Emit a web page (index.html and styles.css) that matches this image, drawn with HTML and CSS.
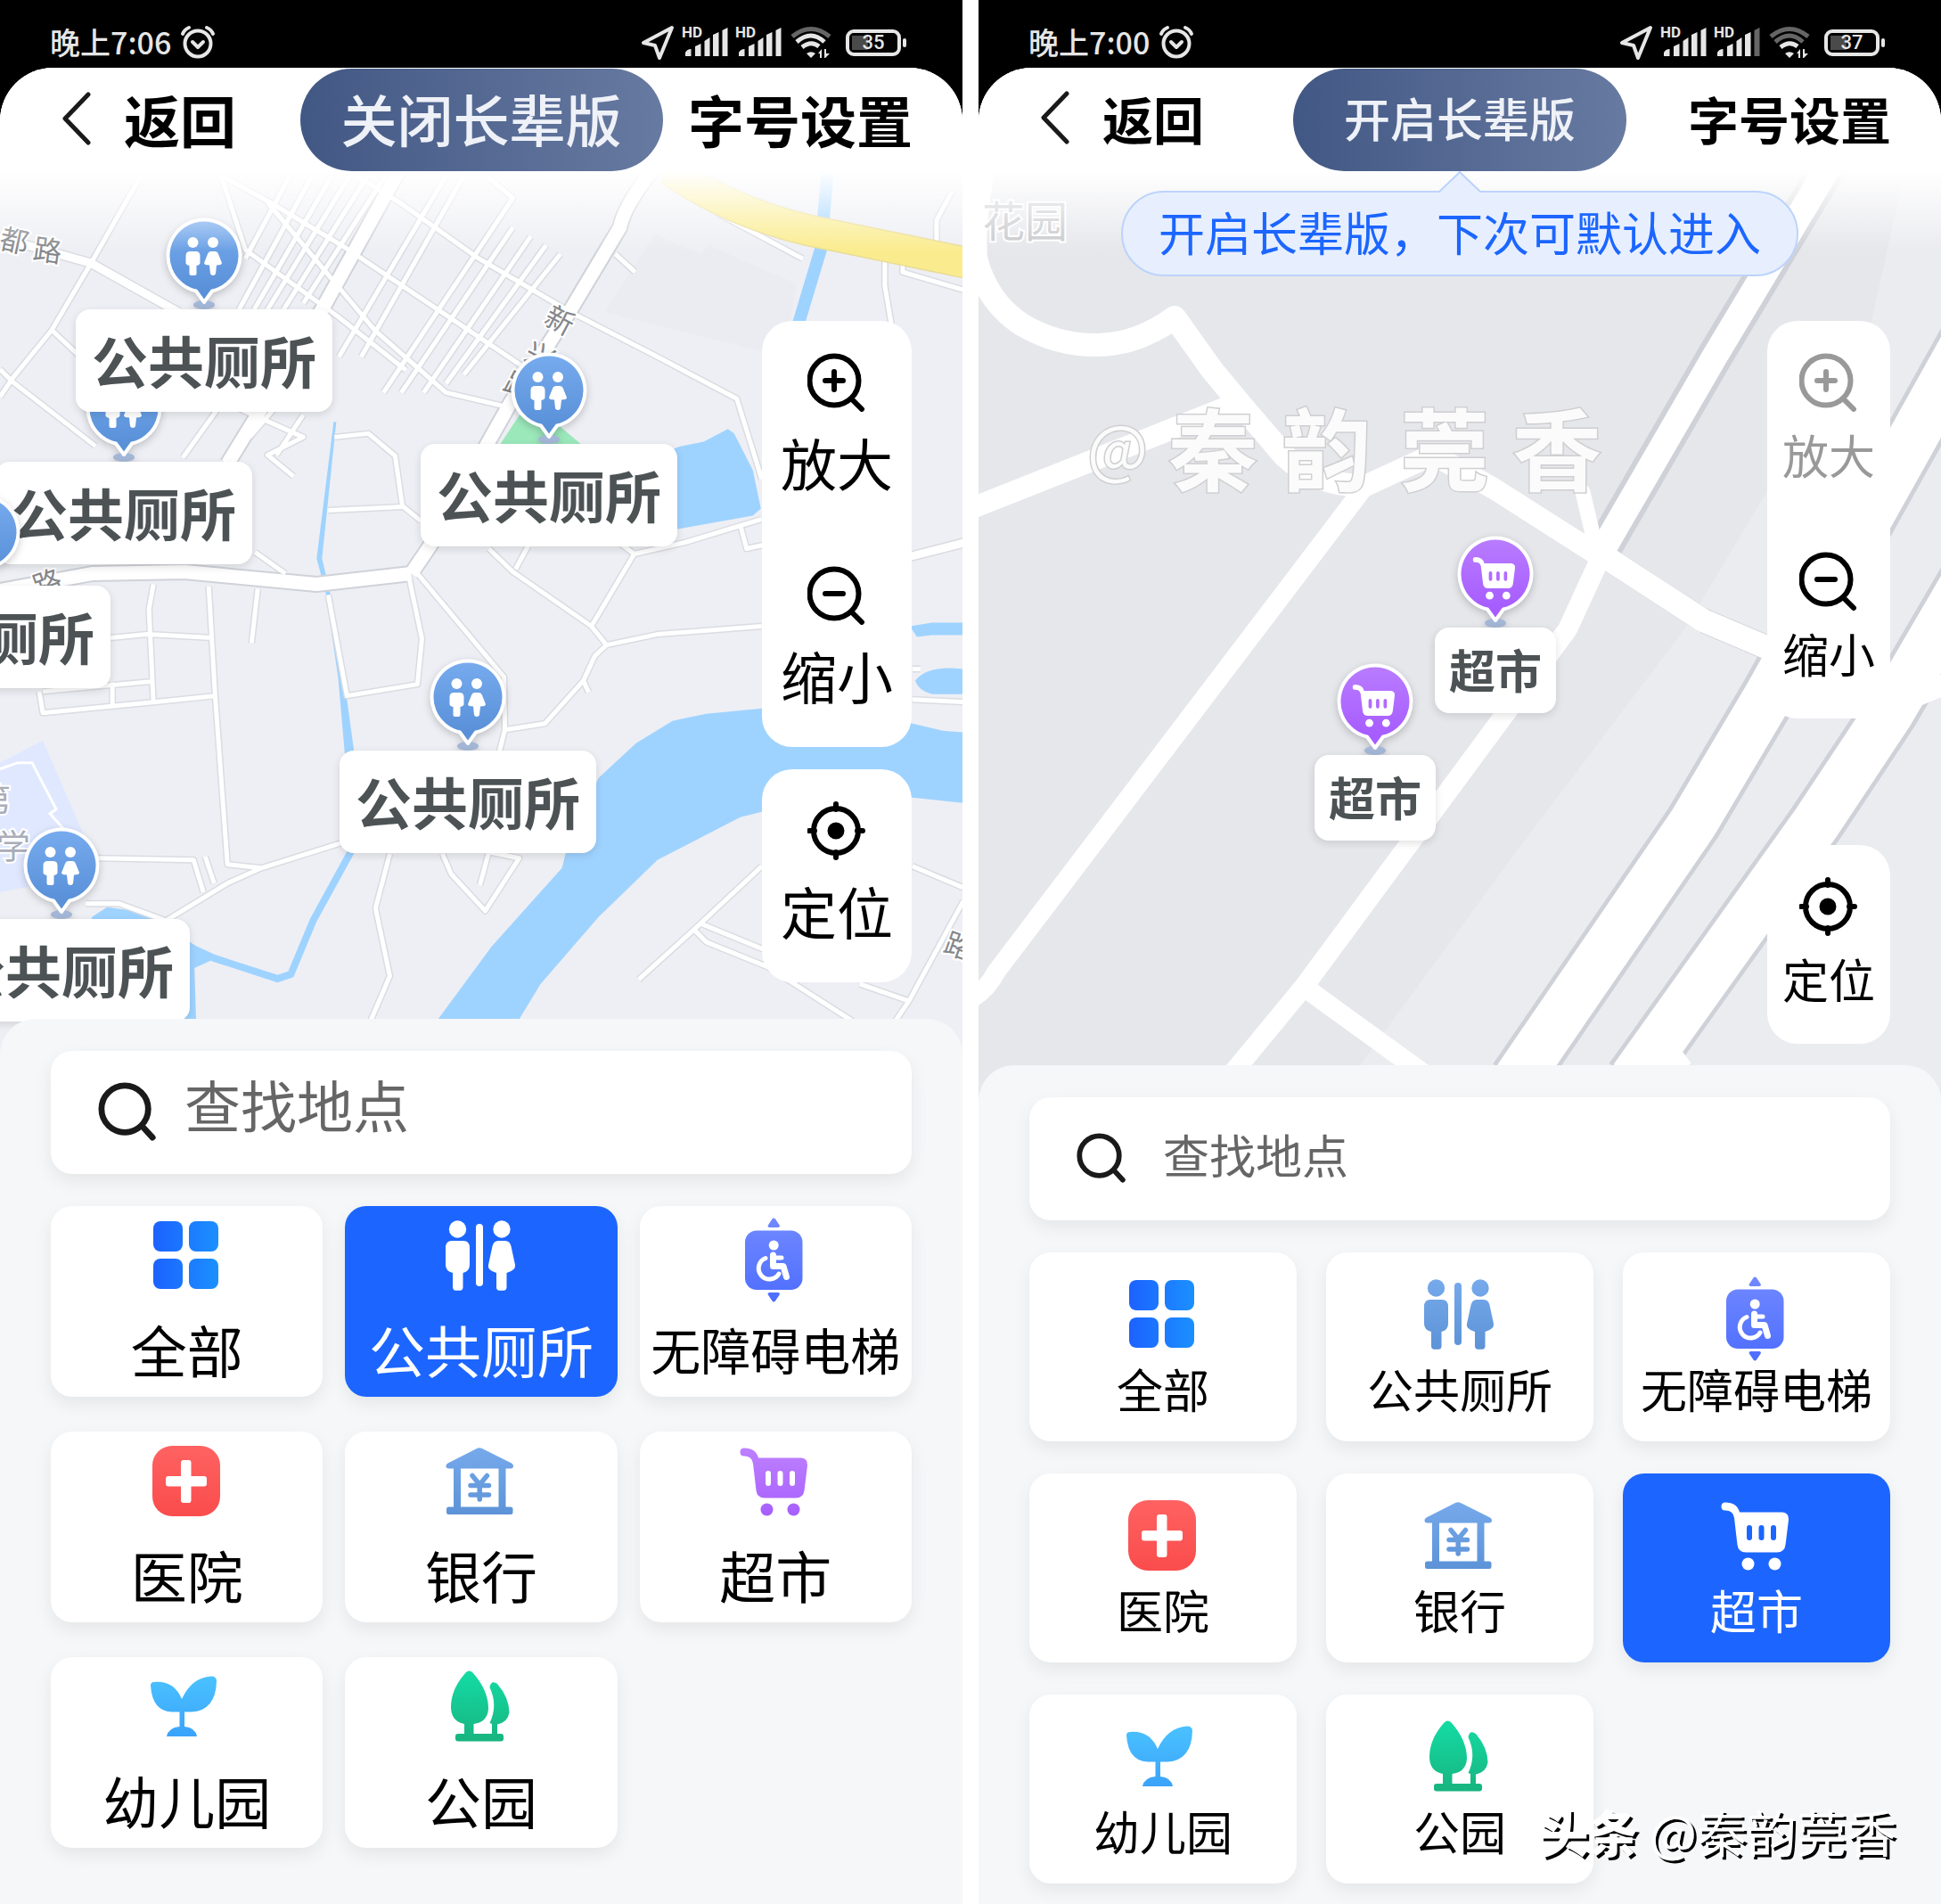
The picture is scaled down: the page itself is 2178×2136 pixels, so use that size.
FILE: index.html
```html
<!DOCTYPE html>
<html lang="zh-CN">
<head>
    <meta charset="UTF-8">
    <meta name="viewport" content="width=device-width, initial-scale=1.0">
    <title>长辈版地图</title>
    <link rel="stylesheet" href="styles.css">
</head>
<body>
    <!-- shared icons -->
    <svg class="sprite" aria-hidden="true">
        <defs>
            <linearGradient id="g-all" gradientUnits="userSpaceOnUse" x1="9" y1="0" x2="82" y2="0"><stop offset="0" stop-color="#1c62ff"/><stop offset="1" stop-color="#1b90ff"/></linearGradient>
            <linearGradient id="g-blue" gradientUnits="userSpaceOnUse" x1="0" y1="4" x2="0" y2="84"><stop offset="0" stop-color="#76aaec"/><stop offset="1" stop-color="#5c92d6"/></linearGradient>
            <linearGradient id="g-indigo" gradientUnits="userSpaceOnUse" x1="0" y1="2" x2="0" y2="95"><stop offset="0" stop-color="#7189ff"/><stop offset="1" stop-color="#4d6dff"/></linearGradient>
            <linearGradient id="g-red" gradientUnits="userSpaceOnUse" x1="0" y1="4" x2="0" y2="83"><stop offset="0" stop-color="#ff6262"/><stop offset="1" stop-color="#fa4c4c"/></linearGradient>
            <linearGradient id="g-purple" gradientUnits="userSpaceOnUse" x1="0" y1="7" x2="0" y2="83"><stop offset="0" stop-color="#bd80ff"/><stop offset="1" stop-color="#a75ffd"/></linearGradient>
            <linearGradient id="g-sky" gradientUnits="userSpaceOnUse" x1="0" y1="9" x2="0" y2="78"><stop offset="0" stop-color="#4ac2ff"/><stop offset="1" stop-color="#3aa2fa"/></linearGradient>
            <linearGradient id="g-green" gradientUnits="userSpaceOnUse" x1="0" y1="4" x2="0" y2="83"><stop offset="0" stop-color="#14dba4"/><stop offset="1" stop-color="#18b47f"/></linearGradient>
            <linearGradient id="g-pin" gradientUnits="userSpaceOnUse" x1="0" y1="6" x2="0" y2="86"><stop offset="0" stop-color="#77abee"/><stop offset="1" stop-color="#5990d8"/></linearGradient>
            <linearGradient id="g-pin-shop" gradientUnits="userSpaceOnUse" x1="0" y1="6" x2="0" y2="86"><stop offset="0" stop-color="#b97cff"/><stop offset="1" stop-color="#a65cff"/></linearGradient>

            <symbol id="i-all" viewBox="0 0 94 96">
                <rect x="9" y="5" width="33" height="34" rx="8"/><rect x="49" y="5" width="33" height="34" rx="8"/>
                <rect x="9" y="47" width="33" height="34" rx="8"/><rect x="49" y="47" width="33" height="34" rx="8"/>
            </symbol>
            <symbol id="i-toilet" viewBox="0 0 94 96">
                <circle cx="20.500" cy="14" r="9.700"/>
                <path d="M14 27H27Q34 27 34 35V54Q34 61 26.500 63V79Q26.500 82.700 23 82.700H18.500Q15 82.700 15 79V63Q7 61 7 54V35Q7 27 14 27Z"/>
                <rect x="41" y="8" width="8" height="70" rx="4"/>
                <circle cx="70" cy="14" r="9.700"/>
                <path d="M66 27H74Q79 27 80.500 33L85 54Q86 60 75.500 63V79Q75.500 82.700 72 82.700H67.500Q64 82.700 64 79V63Q53.500 60 55 54L59.500 33Q61 27 66 27Z"/>
            </symbol>
            <symbol id="i-lift" viewBox="0 0 94 96">
                <path d="M43.500 2.500Q45.200 0.500 47 2.500L52 10Q52 12 50 12H40.500Q38.500 12 38.500 10Z"/>
                <path d="M43.500 94.500Q45.200 96.500 47 94.500L52 87Q52 85 50 85H40.500Q38.500 85 38.500 87Z"/>
                <rect x="13" y="15.500" width="64.500" height="66.500" rx="13"/>
                <circle cx="45.200" cy="32" r="5.500" fill="#fff"/>
                <g fill="none" stroke="#fff" stroke-linecap="round" stroke-linejoin="round">
                    <path stroke-width="7" d="M44.500 43V55.500H56L59.500 67.500"/>
                    <path stroke-width="5" d="M45 46H54"/>
                    <path stroke-width="5" d="M36 46.500A12.200 12.200 0 1 0 51 64"/>
                </g>
            </symbol>
            <symbol id="i-hospital" viewBox="0 0 94 96">
                <rect x="8" y="4" width="76" height="79" rx="22"/>
                <path fill="#fff" d="M43 20H49Q51.500 20 51.500 23V38H66Q69 38 69 41V46.500Q69 49.500 66 49.500H51.500V65Q51.500 68 49 68H43Q40 68 40 65V49.500H26Q23 49.500 23 46.500V41Q23 38 26 38H40V23Q40 20 43 20Z"/>
            </symbol>
            <symbol id="i-bank" viewBox="0 0 94 96">
                <path fill-rule="evenodd" d="M42 7Q45 5.500 48 7L81 23.500Q83.500 25 83 27.500Q82.500 29.500 80 29.500H74.500V72.500H80Q82.500 72.500 82.500 75V78.500Q82.500 81 80 81H10.500Q8 81 8 78.500V75Q8 72.500 10.500 72.500H16V29.500H10.500Q8 29.500 7.500 27.500Q7 25 9.500 23.500ZM24 29.500V72.500H66.500V29.500Z"/>
                <path fill="none" stroke="url(#g-blue)" stroke-width="5.500" stroke-linecap="round" stroke-linejoin="round" d="M37 37.500L45.200 47.500L53.500 37.500M35 48.500H55.500M35 59H55.500M45.200 48V64"/>
            </symbol>
            <symbol id="i-cart" viewBox="0 0 94 96">
                <path d="M12 6.500Q25 6.500 28 17.500H76Q83.500 18 83 26L79.500 54Q78.500 62.500 70 62.500H35Q26.500 62.500 25.500 54L22 24Q21 15.500 12 15.500Q7.500 15.500 7.500 11Q7.500 6.500 12 6.500Z"/>
                <circle cx="37.500" cy="75.500" r="7"/><circle cx="67.500" cy="75.500" r="7"/>
                <path class="slot" d="M39 35V46M52.500 35V46M66 35V46"/>
            </symbol>
            <symbol id="i-sprout" viewBox="0 0 94 96">
                <path d="M10 16Q32 14 41 35Q52 11 74 9.500Q80 9.500 80 15Q79 48 52 49.500H44V66Q56 67 58 77H24Q26 67 38.500 66V49.500H30Q8 49 6 20Q6 16 10 16Z"/>
            </symbol>
            <symbol id="i-tree" viewBox="0 0 94 96">
                <path d="M29.500 5.500Q33.500 1.500 37.500 5.500Q55 25 55 46Q54 61 38.500 63V74H59V63L56.500 62Q66 42 56.500 22Q58 13 65 18Q78 33 78.500 50Q77 61 65 63.500V74H69Q72 74 72 77V79.500Q72 82.500 69 82.500H21Q18 82.500 18 79.500V77Q18 74 21 74H28V63Q13 60 13 44Q13 24 29.500 5.500Z"/>
            </symbol>

            <symbol id="i-pin" viewBox="0 0 96 108">
                <ellipse cx="48" cy="101" rx="12" ry="5" fill="#a3b6d6"/>
                <path class="pin-body" d="M48 98L39 85.500A40.500 40.500 0 1 1 57 85.500Z"/>
            </symbol>
            <symbol id="i-people" viewBox="0 0 96 108">
                <circle cx="35.500" cy="31" r="6"/><circle cx="58" cy="31" r="6"/>
                <path d="M32.500 41H38.500Q43.500 41 43.500 46V54Q43.500 56 39.500 57V66Q39.500 68 37.500 68H33.500Q31.500 68 31.500 66V57Q27.500 56 27.500 54V46Q27.500 41 32.500 41Z"/>
                <path d="M56 41H60Q63 41 64 44L68 54Q68 56.500 62 56.500L61 66Q60.500 68 58 68Q55.500 68 55 66L54 56.500Q48 56.500 48 54L52 44Q53 41 56 41Z"/>
            </symbol>
            <symbol id="i-plus" viewBox="0 0 66 66">
                <path d="M61 63L51 53M30 21V41M20 31H40"/><circle cx="30" cy="31" r="27.500"/>
            </symbol>
            <symbol id="i-minus" viewBox="0 0 66 66">
                <path d="M61 63L51 53M20 31H40"/><circle cx="30" cy="31" r="27.500"/>
            </symbol>
            <symbol id="i-locate" viewBox="0 0 66 66">
                <circle cx="32" cy="33" r="25"/><path d="M32 3V9M32 57V63M2 33H8M56 33H62"/><circle cx="32" cy="33" r="6.500" fill="#000"/>
            </symbol>
            <symbol id="i-search" viewBox="0 0 66 68">
                <circle cx="30" cy="31" r="27"/><path d="M51 52L62 64"/>
            </symbol>
            <symbol id="i-alarm" viewBox="0 0 40 40">
                <circle cx="20" cy="21" r="14.500"/><path d="M14 19L20 25L26 19M3 10Q5 5 10 3M37 10Q35 5 30 3"/>
            </symbol>
            <symbol id="i-nav" viewBox="0 0 38 40">
                <path d="M35 3L3 20L16 23L21 37Z"/>
            </symbol>
            <symbol id="i-bars" viewBox="0 0 50 40">
                <path d="M2 35V31Q4 27 8.500 27V35ZM13 35V24L19.500 21V35ZM23.500 35V18L29.500 14V35ZM33 35V11L39.500 8V35Z"/>
            </symbol>
            <symbol id="i-lastbar" viewBox="0 0 50 40"><path d="M43.500 35V6L49.500 3V35Z"/></symbol>
            <symbol id="i-wifi" viewBox="0 0 48 40">
                <path class="wifi-dot" d="M23 37L18 32Q23 28.500 28 32Z"/>
                <path class="wifi-dot" d="M31 32L35 27V37H33V32ZM38 27H40V32H44L39 37H38Z"/>
                <path d="M13 25Q23 17 32 24"/>
            </symbol>
        </defs>
    </svg>

    <main class="phones">
        <section class="phone phone-elder">
            <div class="statusbar">
                <span class="time">晚上7:06</span>
                <svg class="st-line" width="40" height="40"><use href="#i-alarm"/></svg>
                <div class="status-icons">
                    <svg class="st-line" width="38" height="40"><use href="#i-nav"/></svg>
                    <svg class="st-fill" width="50" height="40"><text x="-2" y="14">HD</text><use href="#i-bars"/><use href="#i-lastbar"/></svg>
                    <svg class="st-fill" width="50" height="40"><text x="-2" y="14">HD</text><use href="#i-bars"/><use href="#i-lastbar"/></svg>
                    <svg class="st-wifi" width="48" height="40"><path class="dim" d="M2 13Q23 -4 44 13"/><path d="M7 19Q23 5 38 19"/><use href="#i-wifi"/></svg>
                    <span class="battery">35</span>
                </div>
            </div>
            <div class="screen">
                <div class="map-area">
                    <svg class="map map-city" viewBox="0 76 1080 1106" preserveAspectRatio="xMinYMin slice" aria-hidden="true">
                        <defs>
                            <g id="city-small">
                                <path d="M158 197L102 295L58 370L14 424L0 445M0 414L14 428L107 500M58 370L90 400"/>
                                <path d="M248 197L303 227L386 277L585 410M248 197L275 280L379 355L455 415M300 227L420 370L500 440L572 457"/>
                                <path d="M399 197L448 227L537 290L640 350L737 400L826 447L854 537"/>
                                <path d="M325 197L275 290M350 197L268 347M372 197L285 347M392 197L300 347M412 197L318 347M432 197L340 340"/>
                                <path d="M500 197L380 400M520 197L405 400M545 197L575 222L430 440M575 255L450 440M595 265L475 440M612 275L500 430M628 285L520 420"/>
                                <path d="M205 513L250 450L340 490L300 510L329 534M310 510L340 465M280 490L310 455"/>
                                <path d="M806 225V240L900 290M1067 215L1050 247V280M992 290V320L1002 380M1012 293V305L1080 325M690 285L712 305"/>
                                <path d="M375 490L413 486L443 511L451 567L472 584M368 572L451 568M286 619L320 643"/>
                                <path d="M172 655L167 683L172 787M234 657L241 777L255 969L293 973L382 945M293 973L255 990L186 1032M124 715L165 711L238 715M44 775L48 799L172 787L241 780M48 775L169 764M126 765V790M289 660L282 721"/>
                                <path d="M368 667L389 780L468 767L473 716L458 645"/>
                                <path d="M468 643L565 759L566 818L558 850M566 818L611 811L654 763L667 735L680 723L737 711L854 702M654 763L660 776M680 723L663 702L575 641L548 615M663 702L711 621L768 608L854 582M690 605L711 621M592 612L578 638M830 589L837 615L860 610"/>
                                <path d="M110 962L217 964L228 1000M230 960L240 990M96 1013H134L186 1032M437 957L421 1018L437 1094L413 1150M496 957L506 980L544 1021L582 962L548 955L538 992"/>
                                <path d="M854 971L778 1042L716 1098M785 1035L870 1070M778 1042L792 1056L861 1084L964 1150M1023 971L1080 995M964 1103L1019 1122L1080 1010M1019 1122L1000 1150M1023 784L1080 787M1023 750H1032"/>
                            </g>
                            <g id="city-mid">
                                <path d="M-5 265L102 295L200 350M1020 624L1090 606"/>
                            </g>
                            <g id="city-main">
                                <path d="M448 190L361 347L285 471L255 520M732 190Q700 230 695 255L640 347L572 452L482 612L461 643"/>
                                <path d="M0 662L103 643L207 641L355 655L461 643"/>
                            </g>
                        </defs>
                        <rect class="land" y="76" width="1080" height="1500"/>
                        <path fill="#ebecf1" d="M734 262L785 285L795 275L893 318L880 400L678 350Z"/>
                        <path fill="#dfe8ff" d="M0 855L48 830L103 957L80 985L0 1000Z"/>
                        <path fill="#9be8bb" d="M582 466L556 505H660L600 455Z"/>
                        <g class="water">
                            <path d="M462 1182L551 1061L630 973L634 957L671 872L713 833L754 808L792 800L854 794Q960 790 1023 811L1057 819L1080 821V900L1023 894Q930 885 854 910L830 916L737 964L671 1028L606 1103L558 1182Z"/>
                            <path d="M700 530L760 501L789 495L816 481L823 486L844 527L853 570L844 578L760 593L700 600Z"/>
                            <path d="M1020 702L1045 698H1080V712H1045L1028 714ZM1026 763Q1040 745 1080 750V778H1045Q1030 775 1026 763Z"/>
                            <path d="M103 1028L120 1017L165 1023L186 1031L190 1045H100ZM205 1050L240 1075L218 1085L220 1150H205Z"/>
                            <path d="M374 473L355 626L365 664L379 759L387 850H398L385 755L370 664L361 626L377 473Z"/>
                        </g>
                        <path class="stream" stroke-width="14" d="M928 190L920 280L893 370"/>
                        <path class="stream" stroke-width="8" d="M396 950L351 1032L326 1092L311 1097L240 1074L205 1058"/>
                        <use href="#city-small" class="edge" stroke-width="8"/>
                        <use href="#city-mid" class="edge" stroke-width="12"/>
                        <use href="#city-main" class="edge edge-main" stroke-width="19"/>
                        <use href="#city-small" class="road" stroke-width="5"/>
                        <use href="#city-mid" class="road" stroke-width="9"/>
                        <use href="#city-main" class="road" stroke-width="15"/>
                        <path fill="none" stroke="#fff" stroke-width="3" d="M0 862L20 855H36L63 907L56 912L72 930"/>
                        <path fill="none" stroke="#e9dc94" stroke-width="36" d="M750 190Q830 245 930 263L1090 296"/>
                        <path fill="none" stroke="#faec8e" stroke-width="33" d="M750 190Q830 245 930 263L1090 296"/>
                        <g class="road-name">
                            <text transform="translate(-2 278) rotate(12)">都</text>
                            <text transform="translate(36 290) rotate(8)">路</text>
                            <text transform="translate(608 362) rotate(28)">新</text>
                            <text transform="translate(586 402) rotate(28)">兴</text>
                            <text transform="translate(562 436) rotate(28)">路</text>
                            <text transform="translate(42 670) rotate(-20)">路</text>
                            <text transform="translate(1056 1066) rotate(20)">路</text>
                        </g>
                        <g class="place-name">
                            <text x="-26" y="910">第</text>
                            <text x="-4" y="962">学</text>
                        </g>
                    </svg>

                    <header class="topbar">
                        <a class="back" href="#"><svg width="34" height="60" viewBox="0 0 34 60"><path d="M30 3L4 30L30 57"/></svg>返回</a>
                        <button class="mode" type="button">关闭长辈版</button>
                        <a class="font-setting" href="#">字号设置</a>
                    </header>

                    <div class="marker m-2"><svg class="pin" width="96" height="108"><use href="#i-pin"/><use class="glyph" href="#i-people"/></svg><span class="tag">公共厕所</span></div>
                    <div class="marker m-1"><svg class="pin" width="96" height="108"><use href="#i-pin"/><use class="glyph" href="#i-people"/></svg><span class="tag">公共厕所</span></div>
                    <div class="marker m-3"><svg class="pin" width="96" height="108"><use href="#i-pin"/><use class="glyph" href="#i-people"/></svg><span class="tag">公共厕所</span></div>
                    <div class="marker m-4"><svg class="pin" width="96" height="108"><use href="#i-pin"/><use class="glyph" href="#i-people"/></svg><span class="tag">公共厕所</span></div>
                    <div class="marker m-5"><svg class="pin" width="96" height="108"><use href="#i-pin"/><use class="glyph" href="#i-people"/></svg><span class="tag">公共厕所</span></div>
                    <div class="marker m-6"><svg class="pin" width="96" height="108"><use href="#i-pin"/><use class="glyph" href="#i-people"/></svg><span class="tag">公共厕所</span></div>

                    <div class="tools">
                        <div class="tool-group">
                            <button class="tool" type="button"><svg width="66" height="66"><use href="#i-plus"/></svg>放大</button>
                            <button class="tool" type="button"><svg width="66" height="66"><use href="#i-minus"/></svg>缩小</button>
                        </div>
                        <div class="tool-group">
                            <button class="tool" type="button"><svg width="66" height="66"><use href="#i-locate"/></svg>定位</button>
                        </div>
                    </div>
                </div>

                <div class="panel">
                    <form class="search">
                        <label for="search-elder" aria-label="查找地点"><svg class="search-icon"><use href="#i-search"/></svg></label>
                        <input id="search-elder" type="text" placeholder="查找地点">
                    </form>
                    <div class="cards">
                        <button class="card" type="button"><svg class="icon" fill="url(#g-all)"><use href="#i-all"/></svg>全部</button>
                        <button class="card active" type="button"><svg class="icon" fill="url(#g-blue)"><use href="#i-toilet"/></svg>公共厕所</button>
                        <button class="card card-long" type="button"><svg class="icon" fill="url(#g-indigo)"><use href="#i-lift"/></svg>无障碍电梯</button>
                        <button class="card" type="button"><svg class="icon" fill="url(#g-red)"><use href="#i-hospital"/></svg>医院</button>
                        <button class="card" type="button"><svg class="icon" fill="url(#g-blue)"><use href="#i-bank"/></svg>银行</button>
                        <button class="card" type="button"><svg class="icon" fill="url(#g-purple)"><use href="#i-cart"/></svg>超市</button>
                        <button class="card" type="button"><svg class="icon" fill="url(#g-sky)"><use href="#i-sprout"/></svg>幼儿园</button>
                        <button class="card" type="button"><svg class="icon" fill="url(#g-green)"><use href="#i-tree"/></svg>公园</button>
                    </div>
                </div>
            </div>
        </section>

        <section class="phone phone-normal">
            <div class="statusbar">
                <span class="time">晚上7:00</span>
                <svg class="st-line" width="40" height="40"><use href="#i-alarm"/></svg>
                <div class="status-icons">
                    <svg class="st-line" width="38" height="40"><use href="#i-nav"/></svg>
                    <svg class="st-fill" width="50" height="40"><text x="-2" y="14">HD</text><use href="#i-bars"/><use href="#i-lastbar"/></svg>
                    <svg class="st-fill" width="50" height="40"><text x="-2" y="14">HD</text><use href="#i-bars"/><use class="dim" href="#i-lastbar"/></svg>
                    <svg class="st-wifi" width="48" height="40"><path class="dim" d="M2 13Q23 -4 44 13"/><path class="dim" d="M7 19Q23 5 38 19"/><use href="#i-wifi"/></svg>
                    <span class="battery">37</span>
                </div>
            </div>
            <div class="screen">
                <div class="map-area">
                    <svg class="map map-street" viewBox="0 76 1080 1160" preserveAspectRatio="xMinYMin slice" aria-hidden="true">
                        <defs>
                            <g id="avenue">
                                <path stroke-width="55" d="M1130 345L888 778L802 923L605 1210M1120 632L1023 798L940 923L735 1210"/>
                            </g>
                            <g id="lane">
                                <path stroke-width="29" d="M958 180L826 400L699 619"/>
                                <path stroke-width="26" d="M699 622L813 696L900 733"/>
                            </g>
                        </defs>
                        <rect class="land" y="76" width="1080" height="1500"/>
                        <path fill="#ebecf0" d="M1040 190L1002 360L881 558L792 706L600 960L395 1240H1080V190Z"/>
                        <use href="#avenue" class="edge" transform="translate(-5 -1)"/>
                        <use href="#avenue" class="edge" transform="translate(5 1)"/>
                        <use href="#lane" class="edge" transform="translate(-5 -3)"/>
                        <use href="#lane" class="edge" transform="translate(5 3)"/>
                        <g class="road">
                            <use href="#avenue"/>
                            <use href="#lane"/>
                            <path stroke-width="26" d="M8 180Q-6 240 -3 290Q10 340 50 365Q90 388 134 387Q180 386 220 356L262 415L296 456L344 512Q380 545 434 545"/>
                            <path stroke-width="24" d="M-10 571L296 450M434 545L510 510L578 548L699 625"/>
                            <path stroke-width="21" d="M434 545L20 1090Q10 1110 -10 1122"/>
                            <path stroke-width="22" d="M696 630L661 706L365 1107L280 1210M365 1107L500 1205"/>
                            <path stroke-width="17" stroke-linecap="round" d="M678 552L694 620"/>
                            <path stroke-width="24" d="M1110 757L1030 790M760 1160L790 1200"/>
                        </g>
                        <text class="district" x="4" y="266">花园</text>
                        <text class="map-mark map-at" x="122" y="530">@</text>
                        <text class="map-mark" x="213 341 473 599" y="543">秦韵莞香</text>
                    </svg>

                    <header class="topbar">
                        <a class="back" href="#"><svg width="34" height="60" viewBox="0 0 34 60"><path d="M30 3L4 30L30 57"/></svg>返回</a>
                        <button class="mode" type="button">开启长辈版</button>
                        <a class="font-setting" href="#">字号设置</a>
                    </header>

                    <div class="tip" role="tooltip">
                        <svg width="48" height="24" viewBox="0 0 48 24"><path d="M0 24L24 1L48 24"/></svg>
                        <span>开启长辈版，下次可默认进入</span>
                    </div>

                    <div class="marker m-7"><svg class="pin pin-shop" width="96" height="108"><use href="#i-pin"/><use class="glyph" href="#i-cart" x="18" y="23" width="59" height="60"/></svg><span class="tag">超市</span></div>
                    <div class="marker m-8"><svg class="pin pin-shop" width="96" height="108"><use href="#i-pin"/><use class="glyph" href="#i-cart" x="18" y="23" width="59" height="60"/></svg><span class="tag">超市</span></div>

                    <div class="tools">
                        <div class="tool-group">
                            <button class="tool" type="button" disabled><svg width="66" height="66"><use href="#i-plus"/></svg>放大</button>
                            <button class="tool" type="button"><svg width="66" height="66"><use href="#i-minus"/></svg>缩小</button>
                        </div>
                        <div class="tool-group">
                            <button class="tool" type="button"><svg width="66" height="66"><use href="#i-locate"/></svg>定位</button>
                        </div>
                    </div>
                </div>

                <div class="panel">
                    <form class="search">
                        <label for="search-normal" aria-label="查找地点"><svg class="search-icon"><use href="#i-search"/></svg></label>
                        <input id="search-normal" type="text" placeholder="查找地点">
                    </form>
                    <div class="cards">
                        <button class="card" type="button"><svg class="icon" fill="url(#g-all)"><use href="#i-all"/></svg>全部</button>
                        <button class="card" type="button"><svg class="icon" fill="url(#g-blue)"><use href="#i-toilet"/></svg>公共厕所</button>
                        <button class="card card-long" type="button"><svg class="icon" fill="url(#g-indigo)"><use href="#i-lift"/></svg>无障碍电梯</button>
                        <button class="card" type="button"><svg class="icon" fill="url(#g-red)"><use href="#i-hospital"/></svg>医院</button>
                        <button class="card" type="button"><svg class="icon" fill="url(#g-blue)"><use href="#i-bank"/></svg>银行</button>
                        <button class="card active" type="button"><svg class="icon" fill="url(#g-purple)"><use href="#i-cart"/></svg>超市</button>
                        <button class="card" type="button"><svg class="icon" fill="url(#g-sky)"><use href="#i-sprout"/></svg>幼儿园</button>
                        <button class="card" type="button"><svg class="icon" fill="url(#g-green)"><use href="#i-tree"/></svg>公园</button>
                    </div>
                </div>
                <p class="credit"><b>头条</b> @秦韵莞香</p>
            </div>
        </section>
    </main>
</body>
</html>
```
FILE: styles.css
```css
* {
    box-sizing: border-box;
}

body {
    margin: 0;
    background: #fff;
    color: #000;
    font-family: "Noto Sans CJK SC", "Noto Sans", sans-serif;
}

button,
input {
    font-family: inherit;
    border: none;
    padding: 0;
    margin: 0;
    color: inherit;
}

a {
    color: inherit;
    text-decoration: none;
}

svg {
    display: block;
    flex: none;
}

.sprite {
    position: absolute;
    width: 0;
    height: 0;
}

.phones {
    display: flex;
    gap: 18px;
    min-height: 100vh;
}

.phone {
    flex: 1;
    min-width: 0;
    display: flex;
    flex-direction: column;
    background: #000;
    overflow: hidden;
}

/* sizes of the two modes */
.phone-elder {
    --text: 63px;
    --long-text: 56px;
    --title: 63px;
    --title-line: 112px;
    --mode-pad: 46px;
    --tool-line: 88px;
    --tool-pad: 21px;
    --tool-gap: 25px;
    --tag-line: 112px;
    --tag-pad: 18px;
    --card-pad: 12px 0 10px;
    --card-line: 88px;
    --card-gap: 8px;
    --grid-gap: 39px 25px;
    --panel-pad: 36px 57px 63px;
    --search-icon: 66px;
    --search-pad: 0 0 20px;
}

.phone-normal {
    --text: 52px;
    --long-text: 52px;
    --title: 57px;
    --title-line: 110px;
    --mode-pad: 57px;
    --tool-line: 72px;
    --tool-pad: 17px;
    --tool-gap: 142px;
    --tag-line: 93px;
    --tag-pad: 16px;
    --card-pad: 26px 0 28px;
    --card-line: 62px;
    --card-gap: 0px;
    --grid-gap: 36px 33px;
    --panel-pad: 36px 57px 23px;
    --search-icon: 56px;
    --search-pad: 0 0 10px;
}

/* status bar */
.statusbar {
    display: flex;
    align-items: center;
    gap: 10px;
    height: 76px;
    padding: 19px 62px 0 56px;
    color: #e6e6e6;
}

.time {
    font-size: 34px;
    font-weight: 500;
    line-height: 38px;
    padding-bottom: 2px;
}

.status-icons {
    display: flex;
    align-items: center;
    gap: 10px;
    margin-left: auto;
}

.st-line {
    fill: none;
    stroke: #e6e6e6;
    stroke-width: 4;
    stroke-linejoin: round;
    stroke-linecap: round;
}

.st-fill {
    overflow: visible;
    fill: #e6e6e6;
    font-family: Roboto, sans-serif;
    font-size: 17px;
    font-weight: 700;
}

.st-wifi {
    fill: none;
    stroke: #e6e6e6;
    stroke-width: 5;
}

.wifi-dot {
    fill: #e6e6e6;
    stroke: none;
}

.st-fill .dim {
    fill: #666;
}

.st-wifi .dim {
    stroke: #666;
}

.battery {
    position: relative;
    width: 62px;
    height: 30px;
    margin: 0 7px 0 4px;
    border: 4px solid #e6e6e6;
    border-radius: 9px;
    background: linear-gradient(90deg, #4a4a4a 18px, transparent 18px) 3px 3px / 50px 16px no-repeat;
    font: 500 22px/22px Roboto, sans-serif;
    text-align: center;
}

.battery::after {
    content: "";
    position: absolute;
    right: -10px;
    top: 6px;
    width: 4px;
    height: 10px;
    border-radius: 2px;
    background: #e6e6e6;
}

/* screen and map */
.screen {
    position: relative;
    flex: 1;
    display: flex;
    flex-direction: column;
    border-radius: 60px 60px 0 0;
    overflow: hidden;
    background: #f5f7f9;
}

.map-area {
    position: relative;
    flex: 1;
    min-height: 1100px;
    overflow: hidden;
}

.map {
    position: absolute;
    inset: 0;
    width: 100%;
    height: 100%;
}

.map-city .land {
    fill: #eeeff4;
}

.map-street .land {
    fill: #e6e7eb;
}

.water {
    fill: #9fd3ff;
}

.stream {
    fill: none;
    stroke: #9fd3ff;
}

.edge {
    fill: none;
    stroke: #dadce2;
    stroke-linejoin: round;
}

.edge-main {
    stroke: #d0d2d9;
}

.map-street .edge {
    stroke: #cfd1d8;
}

.road {
    fill: none;
    stroke: #fff;
    stroke-linejoin: round;
}

.road-name,
.place-name {
    font-size: 32px;
    fill: #85878b;
    stroke: #fff;
    stroke-width: 4;
    paint-order: stroke;
}

.place-name {
    font-size: 38px;
    fill: #a9adb8;
}

.district {
    font-size: 48px;
    fill: #c6c7ca;
    stroke: #fff;
    stroke-width: 4;
    paint-order: stroke;
}

.map-mark {
    font-size: 100px;
    font-weight: 700;
    fill: #fbfbfb;
    stroke: #cfcfd2;
    stroke-width: 3;
    paint-order: stroke;
}

.map-at {
    font-size: 72px;
    font-weight: 400;
}

/* top bar */
.topbar {
    position: relative;
    z-index: 2;
    display: grid;
    grid-template-columns: 1fr auto 1fr;
    align-items: start;
    padding: 1px 56px 90px;
    background: linear-gradient(#fff 116px, rgba(255, 255, 255, 0));
}

.back,
.font-setting {
    font-size: var(--title);
    font-weight: 700;
    line-height: var(--title-line);
    white-space: nowrap;
}

.back {
    display: flex;
    align-items: center;
    gap: 36px;
    padding-left: 13px;
}

.back path {
    fill: none;
    stroke: #1a1a1a;
    stroke-width: 5;
    stroke-linecap: round;
    stroke-linejoin: round;
}

.font-setting {
    justify-self: end;
}

.mode {
    height: 115px;
    padding: 0 var(--mode-pad) 6px;
    border-radius: 58px;
    background: linear-gradient(90deg, #425884, #677aa1);
    color: #eef1f7;
    font-size: var(--text);
    font-weight: 500;
    line-height: 104px;
    white-space: nowrap;
}

.tip {
    position: absolute;
    z-index: 3;
    top: 116px;
    left: 50%;
    transform: translateX(-50%);
    display: flex;
    flex-direction: column;
    align-items: center;
}

.tip svg {
    position: relative;
    margin-bottom: -2px;
}

.tip path {
    fill: #e7efff;
    stroke: #bcd3fb;
    stroke-width: 2;
}

.tip span {
    padding: 0 40px 4px;
    border: 2px solid #bcd3fb;
    border-radius: 48px;
    background: #e7efff;
    color: #1c66ff;
    font-size: 52px;
    line-height: 88px;
    white-space: nowrap;
}

/* markers */
.marker {
    position: absolute;
    display: flex;
    flex-direction: column;
    align-items: center;
    transform: translateX(-50%);
}

.pin {
    margin: 2px 0 -2px;
    filter: drop-shadow(0 3px 4px rgba(0, 0, 0, 0.2));
}

.pin-body {
    fill: var(--pin, url(#g-pin));
    stroke: #fff;
    stroke-width: 4;
    stroke-linejoin: round;
}

.pin-shop {
    --pin: url(#g-pin-shop);
    --slot: #b06cff;
}

.glyph {
    fill: #fff;
}

.slot {
    fill: none;
    stroke: var(--slot, #fff);
    stroke-width: 6;
    stroke-linecap: round;
}

.tag {
    position: relative;
    padding: 0 var(--tag-pad) 3px;
    border-radius: 16px;
    background: #fff;
    box-shadow: 0 3px 10px rgba(0, 0, 0, 0.12);
    color: #4d5355;
    font-size: var(--text);
    font-weight: 700;
    line-height: var(--tag-line);
    white-space: nowrap;
}

.m-1 { left: 229px; top: 163px; }
.m-2 { left: 139px; top: 334px; }
.m-3 { left: -20px; top: 473px; }
.m-4 { left: 616px; top: 314px; }
.m-5 { left: 525px; top: 658px; }
.m-6 { left: 69px; top: 847px; }
.m-7 { left: 580px; top: 520px; }
.m-8 { left: 445px; top: 663px; }

/* zoom and locate */
.tools {
    position: absolute;
    z-index: 3;
    top: 284px;
    right: 57px;
    display: flex;
    flex-direction: column;
    gap: var(--tool-gap);
}

.tool-group {
    border-radius: 34px;
    background: #fff;
    overflow: hidden;
}

.tool {
    display: flex;
    flex-direction: column;
    align-items: center;
    gap: 12px;
    padding: 36px var(--tool-pad) 37px;
    background: none;
    font-size: var(--text);
    line-height: var(--tool-line);
    cursor: pointer;
}

.tool svg {
    fill: none;
    stroke: #000;
    stroke-width: 6;
    stroke-linecap: round;
}

.tool:disabled {
    color: #999;
}

.tool:disabled svg {
    stroke: #999;
}

/* bottom panel */
.panel {
    position: relative;
    z-index: 4;
    margin-top: -40px;
    padding: var(--panel-pad);
    border-radius: 40px 40px 0 0;
    background: #f5f7f9;
}

.search {
    display: flex;
    align-items: center;
    gap: 31px;
    height: 138px;
    margin-bottom: 36px;
    padding: 0 53px 2px;
    border-radius: 24px;
    background: #fff;
    box-shadow: 0 8px 20px rgba(0, 0, 0, 0.07);
}

.search label {
    flex: none;
    width: 66px;
}

.search-icon {
    width: var(--search-icon);
    height: var(--search-icon);
    fill: none;
    stroke: #1a1a1a;
    stroke-width: 7;
    stroke-linecap: round;
}

.search input {
    flex: 1;
    min-width: 0;
    height: 120px;
    padding: var(--search-pad);
    background: none;
    outline: none;
    font-size: var(--text);
}

.search input::placeholder {
    color: #666;
    opacity: 1;
}

.cards {
    display: grid;
    grid-template-columns: repeat(3, 1fr);
    gap: var(--grid-gap);
}

.card {
    display: flex;
    flex-direction: column;
    align-items: center;
    gap: var(--card-gap);
    min-width: 0;
    padding: var(--card-pad);
    border-radius: 24px;
    background: #fff;
    box-shadow: 0 8px 20px rgba(0, 0, 0, 0.07);
    font-size: var(--text);
    line-height: var(--card-line);
    white-space: nowrap;
    cursor: pointer;
}

.card-long {
    font-size: var(--long-text);
}

.icon {
    width: 94px;
    height: 96px;
}

.active {
    --slot: #1c66ff;
    background: #1c66ff;
    color: #fff;
}

.active .icon {
    fill: #fff;
}

.credit {
    position: absolute;
    z-index: 5;
    right: 50px;
    bottom: 42px;
    margin: 0;
    color: #fff;
    font-size: 56px;
    line-height: 80px;
    text-shadow: 3px 3px 0 #000;
}

.credit b {
    font-weight: 900;
}
```
